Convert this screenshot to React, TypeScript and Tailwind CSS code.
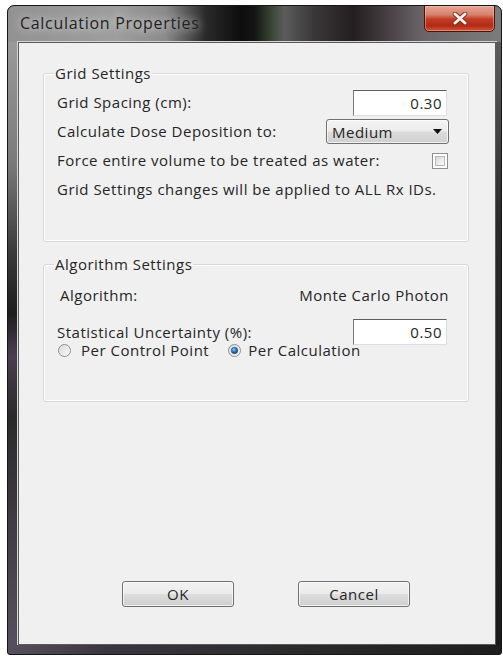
import React from "react"

function CloseGlyph() {
  return (
    <svg width="16" height="13" viewBox="0 0 16 13">
      <path d="M3 2 L13 11 M13 2 L3 11" stroke="#7a2a1c" strokeWidth="4.6" strokeLinecap="round" />
      <path d="M3 2 L13 11 M13 2 L3 11" stroke="#f4f0ee" strokeWidth="3" strokeLinecap="round" />
    </svg>
  )
}

function TitleBar() {
  return (
    <div className="h-[36px] flex items-start justify-between bg-[linear-gradient(to_right,#929292_0%,#9e9e9e_22%,#8a8a8a_32%,#2a2a2a_40%,#0e0e0e_47%,#141414_50%,#34402f_53%,#5c5c5c_56%,#3a3838_62%,#241e20_70%,#4c4448_78%,#6a6468_84%,#7c7c7c_100%)]">
      <div className="pl-[12px] pt-[6px] text-[16px] leading-[22px] tracking-[0.7px] text-[#222] [text-shadow:0_0_8px_rgba(255,255,255,0.7),0_0_14px_rgba(215,215,215,0.6)]">
        Calculation Properties
      </div>
      <button className="mt-[-1px] mr-[6px] w-[71px] h-[27px] flex items-center justify-center rounded-b-[5px] border border-[#4a140c] shadow-[inset_0_0_0_1px_rgba(255,200,190,0.45)] bg-[linear-gradient(to_bottom,#e6a696_0%,#d7816c_35%,#c43e26_52%,#b02a16_78%,#cf5636_100%)]">
        <CloseGlyph />
      </button>
    </div>
  )
}

function TextBox({ value }: { value: string }) {
  return (
    <div className="w-[94px] h-[26px] bg-white border border-[#dadde4] border-t-[#5e5e5e] border-l-[#7a7a7a] flex items-center justify-end pr-[4px] leading-[18px]">
      {value}
    </div>
  )
}

function Dropdown({ value }: { value: string }) {
  return (
    <div className="mr-[-2px] w-[123px] h-[25px] rounded-[3px] border border-[#707070] bg-[linear-gradient(to_bottom,#f4f4f4_0%,#ececec_48%,#dcdcdc_52%,#cfcfcf_100%)] shadow-[inset_0_0_0_1px_rgba(255,255,255,0.7)] flex items-center justify-between pl-[5px] pr-[6px] leading-[18px]">
      <span>{value}</span>
      <svg width="9" height="5" viewBox="0 0 9 5">
        <path d="M0 0 H9 L4.5 5 Z" fill="#111" />
      </svg>
    </div>
  )
}

function CheckBox() {
  return (
    <div className="mr-[-1px] w-[16px] h-[16px] border border-[#8e8f8f] bg-white p-[2px]">
      <div className="w-full h-full border border-[#b8b8b8] bg-[linear-gradient(135deg,#d6d6d6_0%,#ececec_55%,#fafafa_100%)]" />
    </div>
  )
}

function Radio({ checked }: { checked?: boolean }) {
  return (
    <svg width="13" height="13" viewBox="0 0 13 13">
      <defs>
        <linearGradient id="ring" x1="0" y1="0" x2="1" y2="1">
          <stop offset="0" stopColor="#d8d8d8" />
          <stop offset="1" stopColor="#fbfbfb" />
        </linearGradient>
        <radialGradient id="dot" cx="0.4" cy="0.35" r="0.7">
          <stop offset="0" stopColor="#8fd0f4" />
          <stop offset="0.5" stopColor="#2a79b8" />
          <stop offset="1" stopColor="#103a66" />
        </radialGradient>
      </defs>
      <circle cx="6.5" cy="6.5" r="6" fill="url(#ring)" stroke="#8f8f8f" strokeWidth="1" />
      {checked && <circle cx="6.5" cy="6.5" r="3.2" fill="url(#dot)" stroke="#1c4f80" strokeWidth="0.6" />}
    </svg>
  )
}

function GroupBox({ title, children, className }: { title: string; children: React.ReactNode; className?: string }) {
  return (
    <fieldset className={`rounded-[3px] border border-[#d5d8dc] shadow-[inset_0_0_0_1px_#ffffff] ${className ?? ""}`}>
      <legend className="ml-[10px] px-[1px] leading-[18px]">{title}</legend>
      {children}
    </fieldset>
  )
}

export default function App() {
  return (
    <div className="w-[503px] h-[657px] bg-white pt-[5px] pl-[7px] pr-[1px] pb-[2px] font-['Open_Sans',sans-serif] text-[15px] tracking-[0.5px] text-[#262626]">
      <div className="h-full flex flex-col rounded-t-[7px] rounded-b-[3px] border border-[#151515] overflow-hidden bg-[#262428]">
        <TitleBar />

        <div className="flex-1 flex">
          <div className="w-[10px] bg-[linear-gradient(to_bottom,#9a9a9a_0%,#7a7a7a_20%,#3a3a3a_35%,#1e1e1e_45%,#4a3e50_52%,#2a2a2a_62%,#56505e_100%)]" />

          {/* dialog body */}
          <div className="flex-1 flex flex-col bg-[#f0f0f0] border border-[#5a5a5a] shadow-[0_0_0_1px_#d4d4d4] pt-[21px] pl-[24px] pr-[26px] pb-[37px]">
            <GroupBox title="Grid Settings" className="pb-[37px]">
              <div className="mt-[6px] pl-[13px] pr-[21px]">
                <div className="h-[29px] flex items-center justify-between">
                  <span>Grid Spacing (cm):</span>
                  <TextBox value="0.30" />
                </div>
                <div className="h-[29px] flex items-center justify-between">
                  <span>Calculate Dose Deposition to:</span>
                  <Dropdown value="Medium" />
                </div>
                <div className="h-[29px] flex items-center justify-between">
                  <span>Force entire volume to be treated as water:</span>
                  <CheckBox />
                </div>
                <div className="h-[29px] flex items-center">
                  <span className="whitespace-nowrap">Grid Settings changes will be applied to ALL Rx IDs.</span>
                </div>
              </div>
            </GroupBox>

            <GroupBox title="Algorithm Settings" className="mt-[13px] pb-[42px]">
              <div className="mt-[8px] pl-[13px] pr-[21px]">
                <div className="h-[28px] flex items-center justify-between pl-[3px] mr-[-2px]">
                  <span>Algorithm:</span>
                  <span>Monte Carlo Photon</span>
                </div>
                <div className="mt-[10px] h-[22px] flex items-start justify-between">
                  <span className="pt-[4px] leading-[18px]">Statistical Uncertainty (%):</span>
                  <TextBox value="0.50" />
                </div>
                <div className="h-[18px] flex items-center leading-[18px] whitespace-nowrap">
                  <label className="flex items-center gap-[10px] ml-[1px]">
                    <Radio />
                    <span>Per Control Point</span>
                  </label>
                  <label className="flex items-center gap-[7px] ml-[19px]">
                    <Radio checked />
                    <span>Per Calculation</span>
                  </label>
                </div>
              </div>
            </GroupBox>

            <div className="mt-auto flex gap-[64px] ml-[79px]">
              <button className="w-[112px] h-[26px] rounded-[3px] border border-[#707070] bg-[linear-gradient(to_bottom,#f2f2f2_0%,#ebebeb_48%,#dddddd_52%,#cfcfcf_100%)] shadow-[inset_0_0_0_1px_rgba(255,255,255,0.7)] leading-[18px]">
                OK
              </button>
              <button className="w-[112px] h-[26px] rounded-[3px] border border-[#707070] bg-[linear-gradient(to_bottom,#f2f2f2_0%,#ebebeb_48%,#dddddd_52%,#cfcfcf_100%)] shadow-[inset_0_0_0_1px_rgba(255,255,255,0.7)] leading-[18px]">
                Cancel
              </button>
            </div>
          </div>

          <div className="w-[5px] bg-[linear-gradient(to_bottom,#5c5c5c_0%,#2a2a2a_30%,#1a1a1a_100%)]" />
        </div>

        <div className="h-[9px] bg-[linear-gradient(to_right,#56505e_0%,#3a3640_20%,#2a2a2a_60%,#1e1e1e_100%)]" />
      </div>
    </div>
  )
}
